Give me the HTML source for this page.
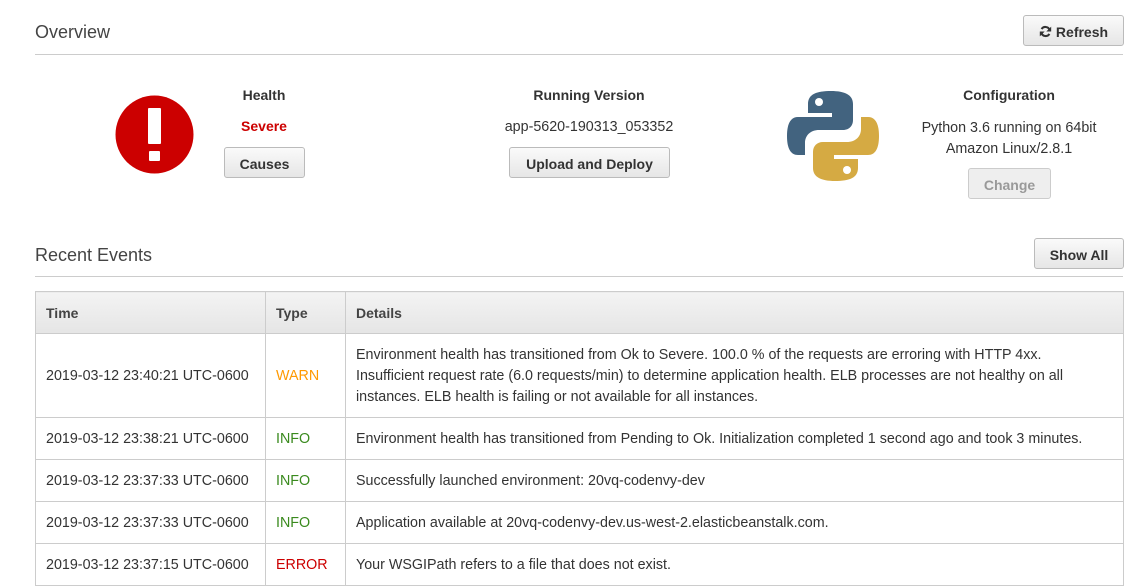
<!DOCTYPE html>
<html><head><meta charset="utf-8"><style>
*{box-sizing:border-box;margin:0;padding:0}
body{width:1129px;height:583px;overflow:hidden;background:#fff;font-family:"Liberation Sans",sans-serif;color:#333;font-size:14.3px;position:relative}
.abs{position:absolute}
.h2{font-size:18px;color:#444}
.hr{position:absolute;left:35px;right:6px;height:1px;background:#ccc}
.btn{position:absolute;border:1px solid #bbb;border-radius:3px;background:linear-gradient(#fafafa,#e6e6e6);font-weight:bold;font-size:14px;color:#333;display:flex;align-items:center;justify-content:center;padding-top:2px}
.c{position:absolute;text-align:center;transform:translateX(-50%);white-space:nowrap}
.b{font-weight:bold;font-size:14px}
table{position:absolute;left:35px;top:291px;width:1089px;border-collapse:collapse}
td,th{border:1px solid #ccc;padding:2px 10px 0;text-align:left;font-size:14.3px;line-height:21px}
th{height:42px;background:linear-gradient(#f3f3f3,#e5e5e5);font-weight:bold;color:#444;font-size:14px}
td{height:42px}
.w{color:#f90}.i{color:#3a8a1e}.e{color:#c00}
</style></head><body>
<div class="abs h2" style="left:35px;top:22px">Overview</div>
<div class="btn" style="left:1023px;top:15px;width:101px;height:31px">
<svg width="13" height="13" viewBox="0 0 16 16" style="margin-right:4px"><path d="M13 6A5.5 5.5 0 0 0 3.2 5M3 10a5.5 5.5 0 0 0 9.8 1" stroke="#333" stroke-width="2.6" fill="none"/><path d="M15 2v6h-6z M1 14V8h6z" fill="#333"/></svg>Refresh</div>
<div class="hr" style="top:54px"></div>

<svg class="abs" style="left:115px;top:95px" width="79" height="79"><circle cx="39.5" cy="39.5" r="39" fill="#c00"/><rect x="33" y="13" width="13" height="36" rx="1" fill="#fff"/><rect x="34" y="56" width="11" height="10" rx="1" fill="#fff"/></svg>
<div class="c b" style="left:264px;top:87px">Health</div>
<div class="c b" style="left:264px;top:118px;color:#c00">Severe</div>
<div class="btn" style="left:224px;top:147px;width:81px;height:31px">Causes</div>

<div class="c b" style="left:589px;top:87px">Running Version</div>
<div class="c" style="left:589px;top:119px">app-5620-190313_053352</div>
<div class="btn" style="left:509px;top:147px;width:161px;height:31px">Upload and Deploy</div>

<svg class="abs" style="left:787px;top:90px" width="92" height="92" viewBox="0 0 92 92">
<path d="M44 1C30 1 21 4 21 14v9h24v4H11C4 27 0 33 0 46s4 19 11 19h7V53c0-8 6-13 14-13h24c6 0 10-4 10-10V14C66 5 58 1 44 1z" fill="#42637f"/>
<circle cx="32" cy="12" r="4" fill="#fff"/>
<path d="M48 91c14 0 23-3 23-13v-9H47v-4h34c7 0 11-6 11-19s-4-19-11-19h-7v12c0 8-6 13-14 13H36c-6 0-10 4-10 10v16c0 9 8 13 22 13z" fill="#d5aa43"/>
<circle cx="60" cy="80" r="4" fill="#fff"/>
</svg>
<div class="c b" style="left:1009px;top:87px">Configuration</div>
<div class="c" style="left:1009px;top:118px;line-height:21px">Python 3.6 running on 64bit<br>Amazon Linux/2.8.1</div>
<div class="btn" style="left:968px;top:168px;width:83px;height:31px;color:#999;border-color:#ccc;background:#eee">Change</div>

<div class="abs h2" style="left:35px;top:245px">Recent Events</div>
<div class="btn" style="left:1034px;top:238px;width:90px;height:31px">Show All</div>
<div class="hr" style="top:276px"></div>

<table>
<tr><th style="width:230px">Time</th><th style="width:80px">Type</th><th>Details</th></tr>
<tr><td style="height:84px">2019-03-12 23:40:21 UTC-0600</td><td class="w">WARN</td><td>Environment health has transitioned from Ok to Severe. 100.0 % of the requests are erroring with HTTP 4xx. Insufficient request rate (6.0 requests/min) to determine application health. ELB processes are not healthy on all instances. ELB health is failing or not available for all instances.</td></tr>
<tr><td>2019-03-12 23:38:21 UTC-0600</td><td class="i">INFO</td><td>Environment health has transitioned from Pending to Ok. Initialization completed 1 second ago and took 3 minutes.</td></tr>
<tr><td>2019-03-12 23:37:33 UTC-0600</td><td class="i">INFO</td><td>Successfully launched environment: 20vq-codenvy-dev</td></tr>
<tr><td>2019-03-12 23:37:33 UTC-0600</td><td class="i">INFO</td><td>Application available at 20vq-codenvy-dev.us-west-2.elasticbeanstalk.com.</td></tr>
<tr><td>2019-03-12 23:37:15 UTC-0600</td><td class="e">ERROR</td><td>Your WSGIPath refers to a file that does not exist.</td></tr>
</table>
</body></html>
